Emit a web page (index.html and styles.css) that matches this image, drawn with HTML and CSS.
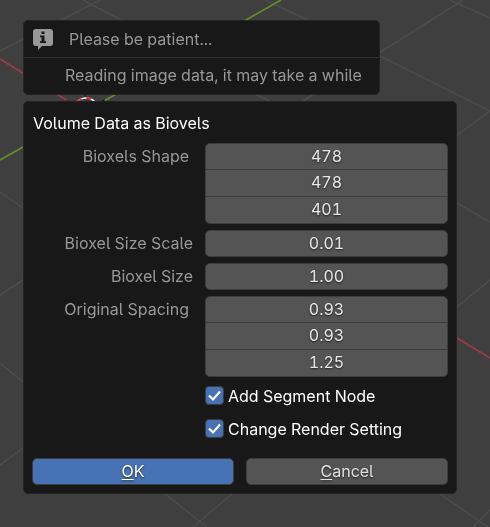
FILE: index.html
```html
<!DOCTYPE html>
<html lang="en">
<head>
<meta charset="utf-8">
<meta name="viewport" content="width=device-width, initial-scale=1">
<title>Volume Data as Biovels</title>
<link rel="stylesheet" href="styles.css">
</head>
<body>
<svg class="viewport" viewBox="0 0 490 527" preserveAspectRatio="xMinYMin slice" aria-hidden="true">
  <g class="grid-lines">
    <path d="M83 0L121 20M100 0L0 51M265 0L308 20M463 0L303 101M380 56L490 111L457 135M450 0L490 18M257 95L270 101M0 192L23 208M457 203L490 222M0 295L23 280M0 363L23 382M457 307L490 280M0 465L23 448M165 494L207 527M232 494L193 527M440 494L488 527M473 527L490 510"/>
  </g>
  <path class="axis-x" d="M0 59L68 101M457 338L490 358"/>
  <path class="axis-y" d="M281 0L104 101M23 147L0 160"/>
  <circle class="cursor-base" cx="86" cy="110" r="12"/>
  <circle class="cursor-dash" cx="86" cy="110" r="12"/>
  <path class="cursor-tick" d="M85 94V97M66 101L69 101M102 101L105 100"/>
</svg>
<main class="stage">
  <section class="notice" role="status">
    <div class="notice-head">
      <svg class="notice-icon" viewBox="0 0 20 21" aria-hidden="true">
        <path fill="#989898" d="M3 0H17Q20 0 20 3V14Q20 17 17 17H9L5 21V17H3Q0 17 0 14V3Q0 0 3 0Z"/>
        <path fill="#181818" d="M8.500 2.500H11.500V5H8.500ZM7 6.500H11.500V12.300H13V14H7V12.300H8.500V8.200H7Z"/>
      </svg>
      <span>Please be patient...</span>
    </div>
    <p class="notice-body">Reading image data, it may take a while</p>
  </section>

  <form class="dialog">
    <h1 class="dialog-title">Volume Data as Biovels</h1>
    <div class="row">
      <label class="label label-vector" for="shape-x">Bioxels Shape</label>
      <div class="fields">
        <input class="field" id="shape-x" type="text" value="478">
        <input class="field" type="text" value="478" aria-label="Bioxels Shape Y">
        <input class="field" type="text" value="401" aria-label="Bioxels Shape Z">
      </div>
    </div>
    <div class="row">
      <label class="label" for="scale">Bioxel Size Scale</label>
      <div class="fields"><input class="field" id="scale" type="text" value="0.01"></div>
    </div>
    <div class="row">
      <label class="label" for="size">Bioxel Size</label>
      <div class="fields"><input class="field" id="size" type="text" value="1.00"></div>
    </div>
    <div class="row">
      <label class="label label-vector" for="spacing-x">Original Spacing</label>
      <div class="fields">
        <input class="field" id="spacing-x" type="text" value="0.93">
        <input class="field" type="text" value="0.93" aria-label="Original Spacing Y">
        <input class="field" type="text" value="1.25" aria-label="Original Spacing Z">
      </div>
    </div>
    <div class="row">
      <label class="check"><span class="box"><input type="checkbox" checked><svg class="tick" viewBox="0 0 19 19" aria-hidden="true"><path d="M4 9.500L8 13.500L15 5.500"/></svg></span>Add Segment Node</label>
    </div>
    <div class="row">
      <label class="check"><span class="box"><input type="checkbox" checked><svg class="tick" viewBox="0 0 19 19" aria-hidden="true"><path d="M4 9.500L8 13.500L15 5.500"/></svg></span>Change Render Setting</label>
    </div>
    <div class="actions">
      <button class="button button-primary" type="button"><span class="key">O</span>K</button>
      <button class="button" type="button"><span class="key">C</span>ancel</button>
    </div>
  </form>
</main>
</body>
</html>
```
FILE: styles.css
```css
* {
  box-sizing: border-box;
}

body {
  margin: 0;
  min-height: 100vh;
  background: #3f3f3f;
  color: #989898;
  font: 16px/20px Inter, "Liberation Sans", sans-serif;
  font-feature-settings: "cv05", "tnum";
}

.viewport {
  position: fixed;
  inset: 0;
  width: 100%;
  height: 100%;
  fill: none;
}

.grid-lines {
  stroke: #4c4c4c;
  stroke-width: 1.5;
}

.axis-x {
  stroke: #9d3b49;
  stroke-width: 1.6;
}

.axis-y {
  stroke: #668f28;
  stroke-width: 1.6;
}

.cursor-base {
  stroke: #fff;
  stroke-width: 1.5;
}

.cursor-dash {
  stroke: #f01818;
  stroke-width: 1.5;
  stroke-dasharray: 4.7;
}

.cursor-tick {
  stroke: #111;
}

.stage {
  position: relative;
  display: flex;
  flex-direction: column;
  gap: 6px;
  padding: 20px 33px 33px 23px;
}

.notice,
.dialog {
  background: #181818;
  border: 1px solid #242424;
  border-radius: 5px;
}

.notice {
  align-self: flex-start;
}

.notice-head {
  display: flex;
  align-items: center;
  gap: 16px;
  height: 37px;
  padding: 0 9px;
  border-bottom: 1px solid #303030;
}

.notice-icon {
  width: 20px;
  height: 21px;
}

.notice-body {
  margin: 0;
  padding: 7px 17px 9px 41px;
}

.dialog {
  display: flex;
  flex-direction: column;
  gap: 6px;
  padding: 9px 8px 8px;
}

.dialog-title {
  margin: 0;
  padding: 2px 1px 4px;
  color: #fff;
  font-size: 16px;
  font-weight: 400;
  line-height: 20px;
}

.row {
  display: grid;
  grid-template-columns: 173fr 243fr;
}

.label {
  padding: 3px 12px 0 0;
  text-align: right;
}

.label-vector {
  padding-right: 16px;
}

.fields {
  display: flex;
  flex-direction: column;
  grid-column: 2;
  overflow: hidden;
  border: 1px solid #3d3d3d;
  border-radius: 5px;
  background: #545454;
}

.field {
  width: 100%;
  height: 25px;
  padding: 0 0 2px;
  border: 0;
  background: transparent;
  color: #e6e6e6;
  font: inherit;
  font-feature-settings: inherit;
  text-align: center;
  text-shadow: 0 1px 2px #222;
}

.field + .field {
  height: 27px;
  border-top: 1px solid #3d3d3d;
}

.check {
  display: flex;
  grid-column: 2;
  align-items: center;
  gap: 4px;
  height: 27px;
  padding-bottom: 2px;
  color: #fff;
}

.box {
  display: grid;
  width: 19px;
  height: 19px;
}

.box > * {
  grid-area: 1 / 1;
}

.box input {
  width: 19px;
  height: 19px;
  margin: 0;
  appearance: none;
  border: 1px solid #3d3d3d;
  border-radius: 4px;
  background: #545454;
}

.box input:checked {
  background: #4772b3;
}

.tick {
  width: 19px;
  height: 19px;
  fill: none;
  stroke: #fff;
  stroke-width: 2.2;
  pointer-events: none;
  visibility: hidden;
}

input:checked + .tick {
  visibility: visible;
}

.actions {
  display: grid;
  grid-template-columns: 1fr 1fr;
  gap: 12px;
  padding-top: 9px;
}

.button {
  height: 27px;
  padding: 0 0 1px;
  border: 1px solid #3d3d3d;
  border-radius: 5px;
  background: #545454;
  color: #e0e0e0;
  font: inherit;
  font-feature-settings: inherit;
  text-shadow: 0 1px 2px #222;
}

.button-primary {
  background: #4772b3;
  color: #fff;
}

.key {
  text-decoration: underline;
  text-underline-offset: 2px;
}
```
